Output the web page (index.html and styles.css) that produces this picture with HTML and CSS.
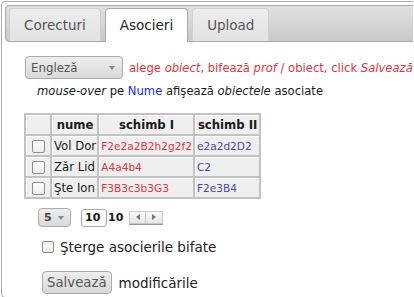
FILE: index.html
```html
<!DOCTYPE html>
<html lang="ro">
<head>
    <meta charset="UTF-8">
    <meta name="viewport" content="width=device-width, initial-scale=1.0">
    <title>Asocieri</title>
    <link rel="stylesheet" href="styles.css">
</head>
<body>
    <div class="tabs">
        <ul class="tab-nav">
            <li class="tab">Corecturi</li>
            <li class="tab active">Asocieri</li>
            <li class="tab">Upload</li>
        </ul>

        <div class="panel">
            <div class="intro">
                <div class="select lang-select">
                    <span>Engleză</span>
                    <span class="arrow"></span>
                </div>
                <span class="hint">alege <i>obiect</i>, bifează <i>prof</i> / obiect, click <i>Salvează</i></span>
            </div>
            <p class="note"><i>mouse-over</i> pe <span class="blue">Nume</span> afişează <i>obiectele</i> asociate</p>

            <table class="assoc">
                <thead>
                    <tr>
                        <th></th>
                        <th>nume</th>
                        <th>schimb I</th>
                        <th>schimb II</th>
                    </tr>
                </thead>
                <tbody>
                    <tr>
                        <td class="chk"><span class="box"></span></td>
                        <td>Vol Dor</td>
                        <td class="code red">F2e2a2B2h2g2f2</td>
                        <td class="code violet">e2a2d2D2</td>
                    </tr>
                    <tr>
                        <td class="chk"><span class="box"></span></td>
                        <td>Zăr Lid</td>
                        <td class="code red">A4a4b4</td>
                        <td class="code violet">C2</td>
                    </tr>
                    <tr>
                        <td class="chk"><span class="box"></span></td>
                        <td>Şte Ion</td>
                        <td class="code red">F3B3c3b3G3</td>
                        <td class="code violet">F2e3B4</td>
                    </tr>
                </tbody>
            </table>

            <div class="pager">
                <div class="select page-size">
                    <span>5</span>
                    <span class="arrow"></span>
                </div>
                <span class="page-input">10</span>
                <span class="page-total">10</span>
                <span class="nav-btns">
                    <span class="nav-btn"><span class="tri left"></span></span>
                    <span class="nav-btn"><span class="tri right"></span></span>
                </span>
            </div>

            <label class="delete-row"><span class="box"></span>Şterge asocierile bifate</label>

            <div class="save-row">
                <button class="save-btn">Salvează</button>
                <span>modificările</span>
            </div>
        </div>
    </div>
</body>
</html>
```

FILE: styles.css
```css
* {
    box-sizing: border-box;
}

html, body {
    overflow: hidden;
}

body {
    margin: 1px;
    font-family: 'DejaVu Sans', Verdana, sans-serif;
    color: #1a1a1a;
    background: #fff;
}

.tabs {
    width: 440px;
    border: 1px solid #aaa;
    border-radius: 4px;
    padding: 3px;
}

.tab-nav {
    display: flex;
    align-items: flex-start;
    gap: 4px;
    list-style: none;
    margin: 0;
    padding: 2px 3px 0;
    border: 1px solid #aaa;
    border-radius: 4px;
    background: linear-gradient(#e1e1e1, #c9c9c9);
    height: 37px;
}

.tab {
    height: 33px;
    line-height: 32px;
    padding: 0 14px;
    font-size: 13.5px;
    color: #555;
    background: linear-gradient(#ededed, #e2e2e2);
    border: 1px solid #d0d0d0;
    border-bottom: 0;
    border-radius: 4px 4px 0 0;
}

.tab.active {
    height: 34px;
    color: #212121;
    background: #fff;
    border-color: #aaa;
}

.panel {
    padding: 14px 19px 0 20px;
    font-size: 11.6px;
}

.intro {
    display: flex;
    align-items: center;
    gap: 6px;
}

.select {
    display: flex;
    align-items: center;
    justify-content: space-between;
    border: 1px solid #aaa;
    border-radius: 4px;
    background: linear-gradient(#eee, #d9d9d9);
    color: #555;
}

.lang-select {
    width: 98px;
    height: 23px;
    padding: 0 7px 0 5px;
    font-size: 11.8px;
}

.arrow {
    width: 0;
    height: 0;
    border-left: 3.5px solid transparent;
    border-right: 3.5px solid transparent;
    border-top: 4px solid #888;
}

.hint {
    color: #e2343e;
    white-space: nowrap;
}

.note {
    margin: 4px 0 0 12px;
    line-height: 16px;
    white-space: nowrap;
}

.blue {
    color: #1d1dff;
}

.assoc {
    margin: 14px 0 0 -1px;
    background: #c2c2c2;
    border-spacing: 2px;
    font-size: 11.7px;
}

.assoc th,
.assoc td {
    height: 19px;
    padding: 0 1px;
    background: #efefef;
    border-top: 1px solid #fff;
    border-left: 1px solid #fff;
    white-space: nowrap;
}

.assoc th {
    font-weight: bold;
    padding: 0 2px;
}

.assoc .chk {
    width: 24px;
    text-align: center;
}

.assoc .code {
    font-size: 10.6px;
}

.red {
    color: #e2343e;
}

.violet {
    color: #4a4aa6;
}

.box {
    display: inline-block;
    width: 13px;
    height: 13px;
    border: 1px solid #8d8d8d;
    border-radius: 2px;
    background: linear-gradient(#fff, #ececec);
    vertical-align: middle;
}

.pager {
    display: flex;
    align-items: center;
    margin: 9px 0 0 13px;
    font-size: 11px;
    font-weight: bold;
}

.page-size {
    width: 33px;
    height: 19px;
    padding: 0 6px 0 5px;
    color: #444;
}

.page-input {
    margin-left: 10px;
    width: 26px;
    height: 18px;
    line-height: 16px;
    padding-left: 3px;
    border: 1px solid #aaa;
    border-radius: 3px;
}

.page-total {
    margin-left: 1px;
}

.nav-btns {
    display: flex;
    margin-left: 6px;
    border-bottom: 1px solid #999;
}

.nav-btn {
    display: flex;
    align-items: center;
    justify-content: center;
    width: 17px;
    height: 13px;
    border: 1px solid #c8c8c8;
    background: linear-gradient(#fafafa, #e6e6e6);
}

.nav-btn + .nav-btn {
    border-left: 0;
}

.tri {
    width: 0;
    height: 0;
    border-top: 3px solid transparent;
    border-bottom: 3px solid transparent;
}

.tri.left {
    border-right: 4px solid #777;
}

.tri.right {
    border-left: 4px solid #777;
}

.delete-row {
    display: flex;
    align-items: center;
    gap: 6px;
    margin: 11px 0 0 17px;
    font-size: 13.5px;
    line-height: 18px;
    color: #222;
}

.delete-row .box {
    width: 12px;
    height: 12px;
}

.save-row {
    display: flex;
    align-items: center;
    gap: 7px;
    margin: 15px 0 0 17px;
    font-size: 13.5px;
    color: #222;
}

.save-btn {
    height: 23px;
    padding: 0 4px;
    font-family: inherit;
    font-size: 13.3px;
    color: #555;
    border: 1px solid #aaa;
    border-radius: 4px;
    background: linear-gradient(#eee, #d8d8d8);
}
```
